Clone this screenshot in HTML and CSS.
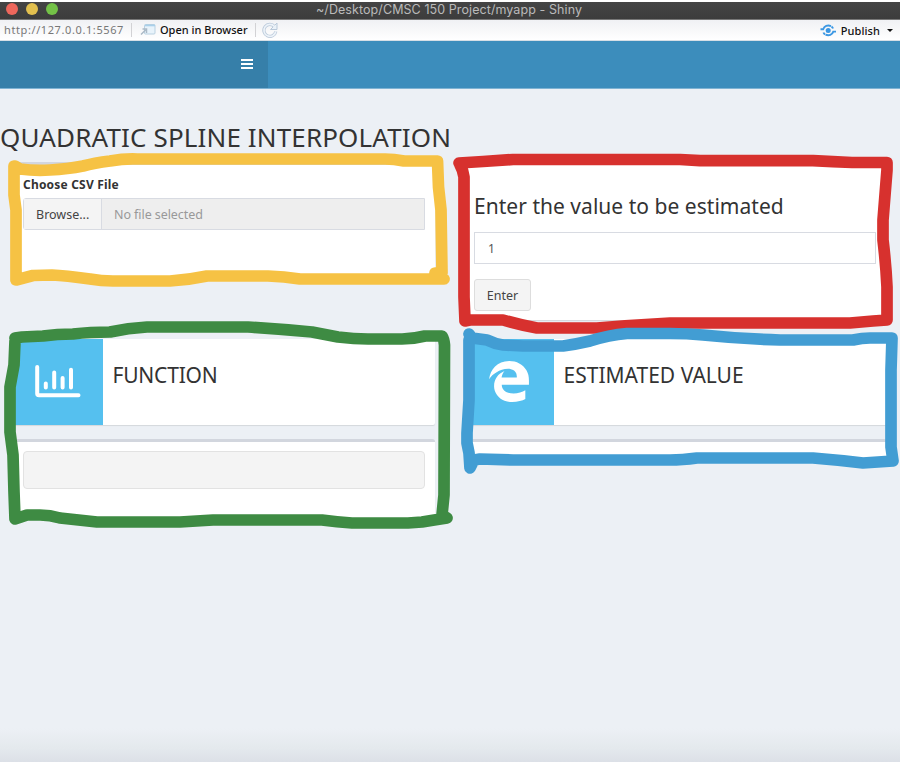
FILE: index.html
```html
<!DOCTYPE html>
<html lang="en">
<head>
<meta charset="utf-8">
<title>~/Desktop/CMSC 150 Project/myapp - Shiny</title>
<link rel="stylesheet" href="styles.css">
</head>
<body>
<div class="window">
  <div class="titlebar">
    <div class="lights"><i class="light close"></i><i class="light minimize"></i><i class="light expand"></i></div>
    <span class="window-title">~/Desktop/CMSC 150 Project/myapp - Shiny</span>
  </div>
  <div class="toolbar">
    <span class="url">http://127.0.0.1:5567</span>
    <i class="sep"></i>
    <svg class="open-icon" width="16" height="12" viewBox="0 0 16 12"><rect x="4.500" y=".5" width="10.500" height="9.500" rx="1" fill="#e8f3fb" stroke="#b9d0e0"/><path d="M5 1.500h10" stroke="#a9d0ea" stroke-width="1.600"/><path d="M1 10.500l4.500-4.500M2.500 5h4v4" fill="none" stroke="#aab9c6" stroke-width="1.500"/></svg>
    <span class="open">Open in Browser</span>
    <i class="sep"></i>
    <svg class="reload" width="16" height="16" viewBox="0 0 16 16"><path d="M12.500 4.500A6 6 0 1 0 13.800 9.500" fill="none" stroke="#b9c8d9" stroke-width="3.200"/><path d="M15 1v6.500H8.500z" fill="#eaf1f8" stroke="#b9c8d9"/><path d="M12.500 4.500A6 6 0 1 0 13.800 9.500" fill="none" stroke="#edf3f9" stroke-width="1.600"/></svg>
    <div class="publish">
      <svg width="17" height="13" viewBox="0 0 17 13"><circle cx="8.200" cy="6.500" r="2.500" fill="#3b97e3"/><path d="M.5 5.200h2.700C4.300 2 7.500.8 11 2.100M16 7.600h-2.700c-1.100 3.200-4.300 4.400-7.800 3.100M11.500 2.500q1.200.9 1.500 2M5 10.500q-1.200-.9-1.500-2" fill="none" stroke="#3b97e3" stroke-width="1.900"/></svg>
      <span>Publish</span><i class="caret"></i>
    </div>
  </div>
  <header class="navbar"><div class="logo"><div class="menu"><i></i><i></i><i></i></div></div></header>
  <main>
    <h1>QUADRATIC SPLINE INTERPOLATION</h1>
    <div class="grid">
      <section class="box upload">
        <label>Choose CSV File</label>
        <div class="file"><span class="browse">Browse...</span><span class="filename">No file selected</span></div>
      </section>
      <section class="box estimate">
        <h2>Enter the value to be estimated</h2>
        <div class="input">1</div>
        <div class="button">Enter</div>
      </section>
      <section class="result">
        <div class="info">
          <div class="info-icon"><svg class="bars" width="46" height="33" viewBox="0 0 46 33"><path d="M2.200 2v26.500q0 1.800 1.800 1.800h39.500M10.800 18.500v4M19.200 7.500v15M27.600 13v9.500M36 4.800v17.700" fill="none" stroke="#fff" stroke-width="4" stroke-linecap="round"/></svg></div>
          <span class="func">FUNCTION</span>
        </div>
        <div class="box output"><div class="pre"></div></div>
      </section>
      <section class="result">
        <div class="info">
          <div class="info-icon"><svg class="edge" width="40" height="41" viewBox="25 8 462 496" preserveAspectRatio="none"><path fill="#fff" d="M486.286 243.671c0-44.032-7.754-84.465-28.801-122.405C416.498 47.879 343.912 8.001 258.893 8.001 118.962 7.724 40.617 113.214 26.056 227.679c42.429-61.312 117.073-121.376 220.375-124.966 0 0 109.666 0 99.419 104.957H169.997c6.369-37.386 18.554-58.986 34.339-78.926-75.048 34.900-121.850 96.096-120.742 188.315.83 71.448 50.124 144.836 120.743 171.976 83.357 31.847 192.776 7.200 240.132-21.324V363.307c-80.864 56.494-270.871 60.925-272.255-67.572h314.073v-52.064z"/></svg></div>
          <span>ESTIMATED VALUE</span>
        </div>
        <div class="box empty"></div>
      </section>
    </div>
  </main>
  <svg class="marks" width="900" height="762" viewBox="0 0 900 762">
    <path stroke="#f6c244" d="M15 166L20 169Q35 171 50 170Q68 169 83 166Q94 163 110 161Q124 158.500 137 159H385Q394 159 404 161H437.500L438.500 187L441 210L442 273H435L444 279H300Q284 276.500 268 276H207Q188 280 170 281H113Q101 281 90 279Q65 275.500 52 275L33 275.500L16 280V210L14 195V166"/>
    <path stroke="#d7312e" d="M459 163L483 161.500L513 159.500H680L700 160.700H813Q833 162 852 162.500H887V170Q885 195 883 220V240Q886 265 887 287V320L873 321L850 323H670Q633 325 597 328H537Q520 325 503 320H470L465 321L464 297V240L464 177Q463 170 460 165"/>
    <path stroke="#3e8b43" d="M15 338L22 337L43 336Q57 334 73 334Q90 332 110 332Q128 328 147 327H248Q280 329 312 332L338 337Q354 339 368 339H402Q413 339 425 336H442Q444 339 444.500 345L444 495L442 515L447 518Q434 520 422 522L408 523H352Q337 522 322 520H213Q196 521 180 522H97L60 518Q50 515 40 515H27L15 519L14 492L13 455L10 432V387L14 365L15 341"/>
    <path stroke="#429dd3" d="M469 334L472 338L487 340Q495 344 503 345L523 346H563Q577 344 590 341Q609 335 627 333.500H670Q687 333.500 703 335Q742 339 780 340H853Q862 338 870 338H892L891 370V447L893 461L863 463Q838 460 813 458H697Q682 460 670 460H513L480 459L474 460L470 468L469 453L467 443V433L469 400V340"/>
  </svg>
</div>
</body>
</html>
```
FILE: styles.css
```css
* { box-sizing: border-box; }
body { margin: 0; background: #fff; font-family: "Noto Sans", sans-serif; color: #333; }
.window { position: relative; width: 900px; height: 762px; padding-top: 2px; overflow: hidden; display: flex; flex-direction: column; }
.titlebar { height: 18px; flex: none; display: grid; grid-template-columns: 150px 1fr 150px; align-items: center; background: linear-gradient(#454545, #3c3c3c); border-bottom: 1px solid #777; }
.lights { display: flex; gap: 8px; padding-left: 6px; margin-top: -4px; }
.light { width: 12px; height: 12px; border-radius: 50%; }
.close { background: #ee675c; } .minimize { background: #e2c04f; } .expand { background: #74c247; }
.window-title { text-align: center; font: 12.5px/16px Inter, sans-serif; color: #bababa; white-space: nowrap; margin-left: -2px; margin-top: -2px; letter-spacing: .08px; }
.toolbar { height: 21px; flex: none; display: flex; align-items: center; padding: 0 7px 0 4px; background: linear-gradient(#f0f1f4, #fff); border-bottom: 1px solid #d7dfe6; font-size: 11px; line-height: 15px; white-space: nowrap; }
.url, .open { padding-bottom: 2px; }
.url { width: 127px; color: #777; letter-spacing: .6px; }
.sep { width: 1px; height: 14px; background: #d2d2d5; }
.open-icon { margin-left: 8px; }
.open { margin-left: 4px; width: 95px; color: #111; font-weight: 500; }
.reload { margin-left: 6px; }
.publish { margin-left: auto; display: flex; align-items: center; gap: 4px; color: #111; font-weight: 500; letter-spacing: .1px; }
.caret { margin-left: 3px; border: 3px solid transparent; border-top: 3.500px solid #111; border-bottom: 0; }
.navbar { height: 48px; flex: none; background: #3c8dbc; border-bottom: 1px solid #7fb3d3; }
.logo { width: 268px; height: 47px; background: #367fa9; display: flex; align-items: center; justify-content: flex-end; padding: 0 15px 2px 0; }
.menu { display: grid; gap: 2px; }
.menu i { width: 12px; height: 2px; background: #fff; }
main { flex: 1; background: linear-gradient(#ecf0f5 0, #ecf0f5 95%, #e4e9ed 98%, #dce0e7 100%); }
h1 { margin: 30px 0 0; height: 43px; font-size: 26px; line-height: 36px; font-weight: 400; white-space: nowrap; letter-spacing: .14px; }
.grid { display: grid; grid-template-columns: 421px 422px; grid-template-rows: 158px auto; column-gap: 30px; row-gap: 19px; padding-left: 14px; align-items: start; }
.box { background: #fff; border-top: 3px solid #d2d6de; border-radius: 3px; box-shadow: 0 1px 1px rgba(0,0,0,.1); padding: 9px; }
.upload { height: 116px; }
label { display: block; font-size: 12px; font-weight: 700; line-height: 22px; height: 24px; letter-spacing: .2px; }
.file { height: 32px; width: 402px; display: flex; border: 1px solid #d8dbe2; border-radius: 3px 0 0 3px; font-size: 12.500px; line-height: 31px; }
.browse { width: 78px; padding-left: 12px; background: #f4f4f4; border-right: 1px solid #d8dbe2; color: #444; }
.filename { flex: 1; padding-left: 12px; background: #eee; color: #999; letter-spacing: -.07px; }
.estimate { height: 158px; }
h2 { margin: 17px 0 0; height: 41px; font-size: 21px; font-weight: 400; line-height: 31px; white-space: nowrap; letter-spacing: .03px; }
.input { width: 402px; height: 32px; border: 1px solid #d8dbe2; padding-left: 13px; font-size: 12px; line-height: 32px; color: #555; }
.button { width: 57px; height: 32px; margin-top: 15px; border: 1px solid #ddd; border-radius: 3px; background: #f4f4f4; font-size: 12.500px; line-height: 31px; text-align: center; color: #444; }
.info { height: 86px; display: flex; background: #fff; box-shadow: 0 1px 1px rgba(0,0,0,.1); border-radius: 2px; margin-bottom: 14px; white-space: nowrap; }
.info > span { margin-left: 10px; margin-top: 21px; font-size: 21px; line-height: 31px; }
.info > .func { letter-spacing: -.2px; }
.info-icon { width: 88.500px; padding-left: 2px; background: #55c0ef; display: flex; align-items: center; justify-content: center; }
.bars { margin-left: -2px; margin-top: -2px; }
.edge { margin-left: -3px; margin-top: -2px; }
.output { height: 80px; }
.pre { width: 402px; height: 38px; border: 1px solid #e2e2e2; border-radius: 4px; background: #f4f4f4; }
.empty { height: 22px; }
.marks { position: absolute; left: 0; top: 0; pointer-events: none; fill: none; stroke-width: 11.700px; stroke-linecap: round; stroke-linejoin: round; }
```
